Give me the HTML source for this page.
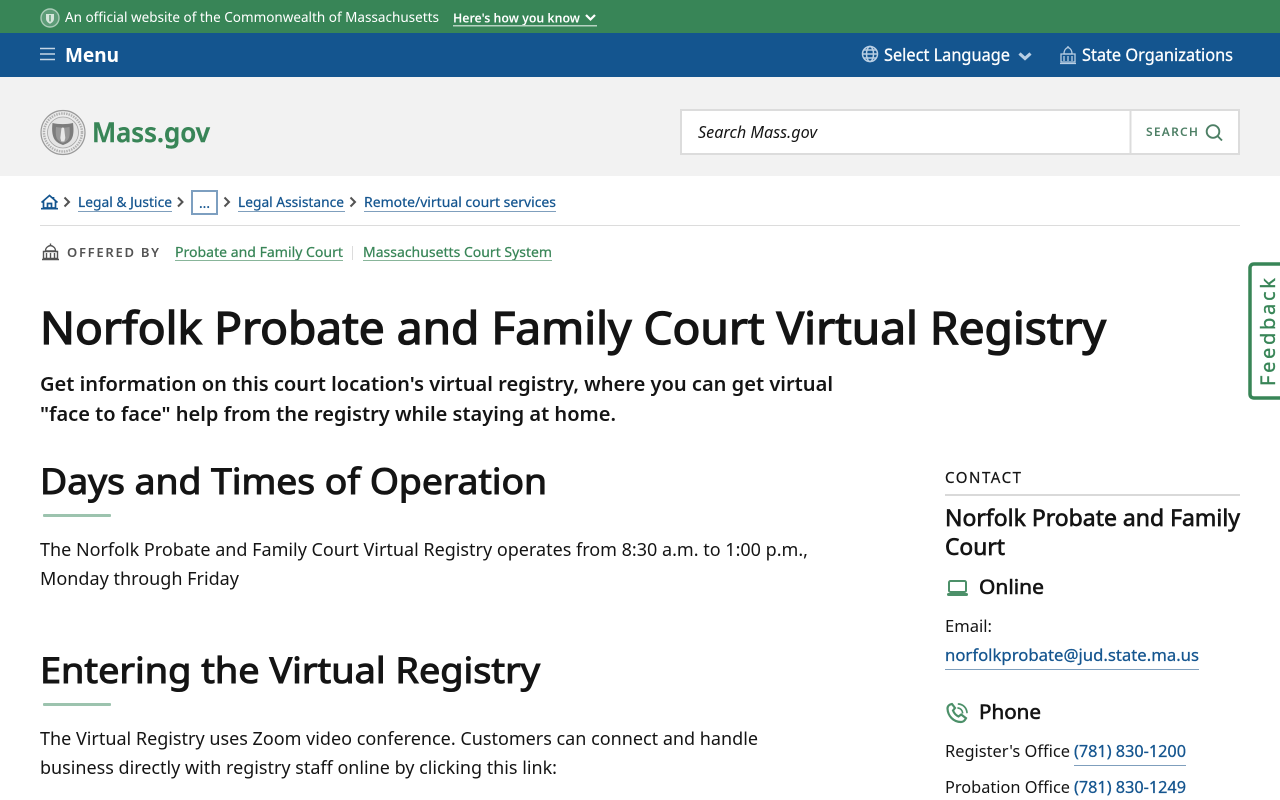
<!DOCTYPE html>
<html lang="en"><head><meta charset="utf-8"><title>Norfolk Probate and Family Court Virtual Registry</title>
<style>
html,body{margin:0;padding:0;width:1280px;height:800px;overflow:hidden;background:#fff}
svg{display:block}
text{font-family:"Noto Sans","DejaVu Sans","Liberation Sans",sans-serif;fill:#141414}
.b{fill:#14558f}.g{fill:#388557}.w{fill:#fff}
.m{stroke:#141414;stroke-width:.03em}
.b.m{stroke:#14558f}.g.m{stroke:#388557}.w.m{stroke:#fff}
.s{stroke-width:.016em}
</style></head><body>
<svg width="1280" height="800" viewBox="0 0 1280 800" xmlns="http://www.w3.org/2000/svg">
<rect width="1280" height="33" fill="#388557"/>
<rect y="33" width="1280" height="44" fill="#14558f"/>
<rect y="77" width="1280" height="99" fill="#f2f2f2"/>

<!-- top bar -->
<circle cx="50" cy="18" r="9" fill="#5d9c78" stroke="#a9ccb7" stroke-width="1.400"/>
<path d="M46 14h8v4.500c0 2.800-2 4.200-4 5.300-2-1.100-4-2.500-4-5.300z" fill="#d4e6db"/>
<path d="M50 15v6.500" stroke="#7aae8f" stroke-width="2"/>
<text class="w" x="65" y="22" font-size="14" textLength="374" lengthAdjust="spacingAndGlyphs">An official website of the Commonwealth of Massachusetts</text>
<text class="w" x="453" y="22.500" font-size="13" font-weight="600" textLength="127" lengthAdjust="spacingAndGlyphs">Here's how you know</text>
<path d="M586 15l4.500 4.500 4.500-4.500" fill="none" stroke="#fff" stroke-width="2.200"/>
<rect x="453" y="25" width="144" height="1.500" fill="#b6d3c2"/>

<!-- nav -->
<path d="M40 48.500h15M40 54h15M40 59.500h15" stroke="#c5d6e6" stroke-width="1.400"/>
<text class="w" x="65" y="62" font-size="20" font-weight="700" textLength="54" lengthAdjust="spacingAndGlyphs">Menu</text>
<g fill="none" stroke="#b9cfe4" stroke-width="1.500">
<circle cx="870" cy="54" r="7.500"/><ellipse cx="870" cy="54" rx="3.500" ry="7.500"/><path d="M862.500 54h15M863.500 50h13M863.500 58h13"/>
</g>
<text class="w m s" x="884" y="61" font-size="17" textLength="126" lengthAdjust="spacingAndGlyphs">Select Language</text>
<path d="M1019.500 53.500l5.500 5 5.500-5" fill="none" stroke="#b9cfe4" stroke-width="3.200"/>
<g fill="none" stroke="#b9cfe4" stroke-width="1.300">
<path d="M1064 54c0-4 2-6 4-6.500 2 .5 4 2.500 4 6.500z"/><path d="M1068 46v2M1061 54h14v8h-14zM1060 63.500h16M1064 56v5M1068 56v5M1072 56v5"/>
</g>
<text class="w m s" x="1082" y="61" font-size="17" textLength="151" lengthAdjust="spacingAndGlyphs">State Organizations</text>

<!-- logo -->
<circle cx="63" cy="132.500" r="22" fill="#ececec" stroke="#9a9a9a" stroke-width="1.200"/>
<circle cx="63" cy="132.500" r="19" fill="none" stroke="#b2b2b2" stroke-width="2.500" stroke-dasharray="1.500 1"/>
<circle cx="63" cy="132.500" r="15.500" fill="#e4e4e4" stroke="#a5a5a5" stroke-width=".8"/>
<path d="M52.500 123c6.500 1.500 14 1.500 20.500 0 1 8 .5 13.500-2 17-2 2.500-5 4-8 5-3-1-6-2.500-8-5-2.500-3.500-3.500-9-2.500-17z" fill="#7c7c7c"/>
<path d="M56 127c4 .8 9 .8 13.500 0 .5 6 .2 10-1.500 12.500-1.300 1.700-3.200 2.800-5.200 3.500-2-.7-4-1.800-5.300-3.500-1.700-2.500-2-6.500-1.500-12.500z" fill="#989898"/>
<path d="M62.800 127.500c1 0 1.500.8 1.500 2l1 8.500-1 3.500h-3l-1-3.500 1-8.500c0-1.200.5-2 1.500-2z" fill="#e8e8e8"/>
<text class="g m s" x="92" y="142" font-size="27" font-weight="600" textLength="118" lengthAdjust="spacingAndGlyphs">Mass.gov</text>

<!-- search -->
<rect x="681" y="110" width="558" height="44" fill="#fff" stroke="#dcdcdc" stroke-width="2"/>
<rect x="1129.500" y="110" width="2" height="44" fill="#dcdcdc"/>
<text x="698" y="138" font-size="16" font-style="italic" textLength="119" lengthAdjust="spacingAndGlyphs">Search Mass.gov</text>
<text x="1146" y="136" font-size="12" font-weight="600" style="fill:#4d7f65" textLength="52" lengthAdjust="spacing">SEARCH</text>
<circle cx="1213" cy="131.500" r="6.300" fill="none" stroke="#4d7f65" stroke-width="1.900"/>
<path d="M1217.500 136l4.500 4.500" stroke="#4d7f65" stroke-width="1.900"/>

<!-- breadcrumbs -->
<g fill="none" stroke="#14558f" stroke-width="1.700">
<path d="M41.500 202.500l8-7 8 7M43.500 201v7h12v-7M47.500 208v-4.500h4v4.500M53.500 197v2.500"/><path d="M41 208.700h17"/>
</g>
<g fill="none" stroke="#535353" stroke-width="2">
<path d="M64.500 197.500l4.500 4.500-4.500 4.500M178 197.500l4.500 4.500-4.500 4.500M224.500 197.500l4.500 4.500-4.500 4.500M350.500 197.500l4.500 4.500-4.500 4.500"/>
</g>
<text class="b m s" x="78" y="207" font-size="14" textLength="94" lengthAdjust="spacingAndGlyphs">Legal &amp; Justice</text>
<rect x="78" y="211" width="94" height="1" fill="#7f9fbd"/>
<rect x="192" y="191" width="25" height="23" fill="#fff" stroke="#7d9fc0" stroke-width="2"/>
<text class="b m s" x="199" y="208" font-size="14" textLength="11" lengthAdjust="spacingAndGlyphs">...</text>
<text class="b m s" x="238" y="207" font-size="14" textLength="106" lengthAdjust="spacingAndGlyphs">Legal Assistance</text>
<rect x="238" y="211" width="107" height="1" fill="#7f9fbd"/>
<text class="b m s" x="364" y="207" font-size="14" textLength="192" lengthAdjust="spacingAndGlyphs">Remote/virtual court services</text>
<rect x="364" y="211" width="192" height="1" fill="#7f9fbd"/>
<rect x="40" y="225" width="1200" height="1" fill="#dcdcdc"/>

<!-- offered by -->
<g fill="none" stroke="#535353" stroke-width="1.400">
<path d="M45.500 251c0-3 2.200-5 5-5.500 2.800.5 5 2.500 5 5.500zM50.500 243.500v2M43.500 251.500h14v7h-14zM42 259.500h17M46.500 253v5M50.500 253v5M54.500 253v5"/>
</g>
<text x="67" y="257" font-size="13" font-weight="600" style="fill:#535353" textLength="92" lengthAdjust="spacing">OFFERED BY</text>
<text class="g m s" x="175" y="257" font-size="14" textLength="168" lengthAdjust="spacingAndGlyphs">Probate and Family Court</text>
<rect x="175" y="260" width="168" height="1" fill="#88b59a"/>
<rect x="352" y="246" width="1" height="14" fill="#dcdcdc"/>
<text class="g m s" x="363" y="257" font-size="14" textLength="189" lengthAdjust="spacingAndGlyphs">Massachusetts Court System</text>
<rect x="363" y="260" width="189" height="1" fill="#88b59a"/>

<!-- heading -->
<text class="m" x="40" y="344" font-size="45" textLength="1066" lengthAdjust="spacingAndGlyphs">Norfolk Probate and Family Court Virtual Registry</text>
<text x="40" y="391" font-size="20" font-weight="600" textLength="793" lengthAdjust="spacingAndGlyphs">Get information on this court location's virtual registry, where you can get virtual</text>
<text x="40" y="421" font-size="20" font-weight="600" textLength="576" lengthAdjust="spacingAndGlyphs">"face to face" help from the registry while staying at home.</text>

<text class="m" x="40" y="494" font-size="36" textLength="507" lengthAdjust="spacingAndGlyphs">Days and Times of Operation</text>
<rect x="43" y="514" width="68" height="3" rx="1" fill="#9cc3ae"/>
<text x="40" y="556" font-size="18" textLength="768" lengthAdjust="spacingAndGlyphs">The Norfolk Probate and Family Court Virtual Registry operates from 8:30 a.m. to 1:00 p.m.,</text>
<text x="40" y="585" font-size="18" textLength="199" lengthAdjust="spacingAndGlyphs">Monday through Friday</text>

<text class="m" x="40" y="683" font-size="36" textLength="500" lengthAdjust="spacingAndGlyphs">Entering the Virtual Registry</text>
<rect x="43" y="703" width="68" height="3" rx="1" fill="#9cc3ae"/>
<text x="40" y="745" font-size="18" textLength="718" lengthAdjust="spacingAndGlyphs">The Virtual Registry uses Zoom video conference. Customers can connect and handle</text>
<text x="40" y="774" font-size="18" textLength="517" lengthAdjust="spacingAndGlyphs">business directly with registry staff online by clicking this link:</text>

<!-- sidebar -->
<text class="m s" x="945" y="483" font-size="15" textLength="76" lengthAdjust="spacing">CONTACT</text>
<rect x="945" y="494" width="295" height="2" fill="#d9d9d9"/>
<text class="m" x="945" y="526" font-size="23" textLength="295" lengthAdjust="spacingAndGlyphs">Norfolk Probate and Family</text>
<text class="m" x="945" y="555" font-size="23" textLength="60" lengthAdjust="spacingAndGlyphs">Court</text>
<g fill="none" stroke="#4c9069" stroke-width="2">
<rect x="949" y="581" width="17" height="11" rx="1.500"/>
<path d="M948.500 594.500h18" stroke-width="3" stroke-linecap="round"/>
</g>
<text class="m" x="979" y="594" font-size="20" textLength="65" lengthAdjust="spacingAndGlyphs">Online</text>
<text x="945" y="632" font-size="16" textLength="47" lengthAdjust="spacingAndGlyphs">Email:</text>
<text class="b m s" x="945" y="661" font-size="16" textLength="254" lengthAdjust="spacingAndGlyphs">norfolkprobate@jud.state.ma.us</text>
<rect x="945" y="669" width="254" height="1" fill="#7f9fbd"/>
<g fill="none" stroke="#4c9069" stroke-width="2.200" stroke-linecap="round">
<path d="M952 704c-2.500.3-4.500 2-4.500 4.500.3 7.500 6 13.500 13.500 13.500 2.300 0 4-1.700 5-3.800l-4.800-3.700-2.700 2c-2.500-1.200-4.500-3.500-5.500-6l2-2.500z"/>
<path d="M958 708c2.500.3 4.300 2.200 4.600 4.800M958.500 704c4.700.3 8 3.800 8.500 8.500" stroke-width="1.700"/>
</g>
<text class="m" x="979" y="719" font-size="20" textLength="62" lengthAdjust="spacingAndGlyphs">Phone</text>
<text x="945" y="757" font-size="16" textLength="125" lengthAdjust="spacingAndGlyphs">Register's Office</text>
<text class="b m s" x="1074" y="757" font-size="16" textLength="112" lengthAdjust="spacingAndGlyphs">(781) 830-1200</text>
<rect x="1074" y="765" width="112" height="1" fill="#7f9fbd"/>
<text x="945" y="793" font-size="16" textLength="125" lengthAdjust="spacingAndGlyphs">Probation Office</text>
<text class="b m s" x="1074" y="793" font-size="16" textLength="112" lengthAdjust="spacingAndGlyphs">(781) 830-1249</text>

<!-- feedback -->
<path d="M1280 264h-26c-2.500 0-4 1.500-4 4v126c0 2.500 1.500 4 4 4h26" fill="#fff" stroke="#388557" stroke-width="3.500"/>
<text class="g m s" transform="translate(1275 386) rotate(-90)" x="0" y="0" font-size="20" textLength="108" lengthAdjust="spacing">Feedback</text>
</svg>
</body></html>
